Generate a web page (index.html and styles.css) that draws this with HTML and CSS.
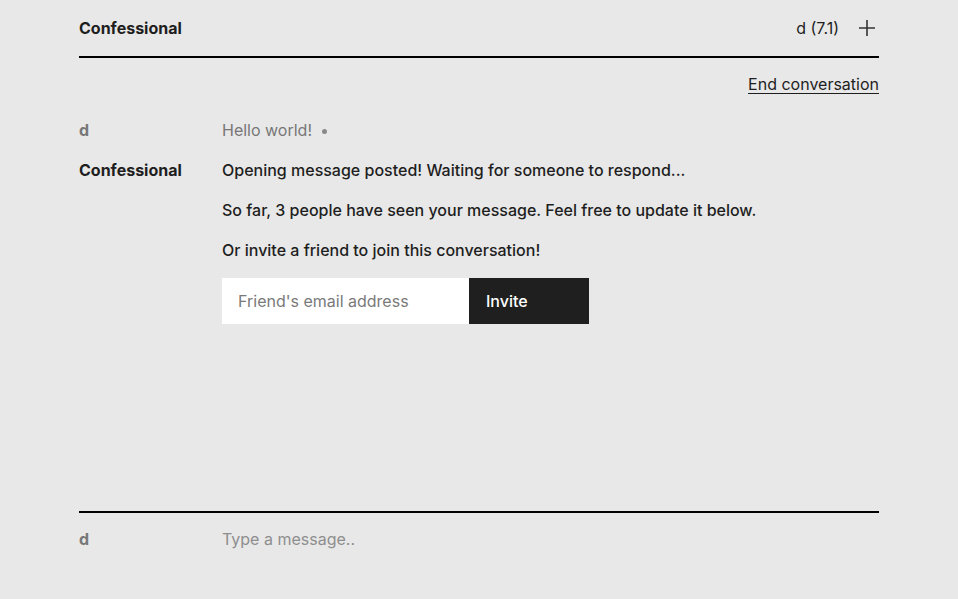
FILE: index.html
```html
<!DOCTYPE html>
<html lang="en">
<head>
<meta charset="utf-8">
<title>Confessional</title>
<link rel="stylesheet" href="styles.css">
</head>
<body>
<div class="page">
  <header class="header">
    <div class="title">Confessional</div>
    <div class="header-right">
      <span class="user">d (7.1)</span>
      <svg class="plus" width="16" height="16" viewBox="0 0 16 16" aria-hidden="true">
        <path d="M8 0V16M0 8H16" stroke="#333" stroke-width="1.6" fill="none"/>
      </svg>
    </div>
  </header>
  <div class="actions"><a class="end" href="#">End conversation</a></div>
  <main class="messages">
    <div class="msg">
      <div class="author muted">d</div>
      <div class="body">
        <p class="text grey">Hello world! <span class="dot"></span></p>
      </div>
    </div>
    <div class="msg">
      <div class="author">Confessional</div>
      <div class="body">
        <p class="text">Opening message posted! Waiting for someone to respond...</p>
        <p class="text">So far, 3 people have seen your message. Feel free to update it below.</p>
        <p class="text">Or invite a friend to join this conversation!</p>
        <form class="invite">
          <input class="email" type="text" placeholder="Friend's email address">
          <button class="invite-btn" type="button">Invite</button>
        </form>
      </div>
    </div>
  </main>
  <footer class="composer">
    <div class="author muted">d</div>
    <input class="message-input" type="text" placeholder="Type a message..">
  </footer>
</div>
</body>
</html>
```

FILE: styles.css
```css
* { box-sizing: border-box; }
html, body { margin: 0; padding: 0; }
body {
  background: #e8e8e8;
  color: #1e1e1e;
  font-family: Inter, "Noto Sans", sans-serif;
  font-size: 16px;
  line-height: 24px;
}
.page {
  width: 800px;
  margin: 0 auto;
  height: 100vh;
  display: flex;
  flex-direction: column;
}
.header {
  height: 58px;
  border-bottom: 2px solid #000;
  display: flex;
  align-items: center;
  justify-content: space-between;
}
.title { font-weight: 700; }
.header-right {
  display: flex;
  align-items: center;
  gap: 20px;
  padding-right: 4px;
}
.plus { display: block; }
.actions {
  display: flex;
  justify-content: flex-end;
  margin-top: 14px;
}
.end {
  color: #1e1e1e;
  text-decoration: underline;
  text-underline-offset: 3px;
}
.messages {
  flex: 1;
  padding-top: 22px;
  display: flex;
  flex-direction: column;
  gap: 16px;
}
.msg {
  display: flex;
}
.author {
  width: 143px;
  flex: none;
  font-weight: 700;
}
.muted { color: #777; }
.body { flex: 1; }
.text { margin: 0 0 16px; font-weight: 500; }
.grey { color: #777; font-weight: 400; }
.msg:first-child .text { margin: 0; }
.dot {
  display: inline-block;
  width: 5px;
  height: 5px;
  border-radius: 50%;
  background: #888;
  margin-left: 5px;
  vertical-align: middle;
}
.invite {
  display: flex;
  margin: 0;
}
.email {
  width: 247px;
  height: 46px;
  border: 0;
  background: #fff;
  padding: 0 16px;
  font: inherit;
  color: #1e1e1e;
  outline: none;
}
.email::placeholder { color: #7a7a7a; }
.invite-btn {
  width: 120px;
  height: 46px;
  border: 0;
  background: #1f1f1f;
  color: #fff;
  font: inherit;
  font-weight: 500;
  text-align: left;
  padding: 0 17px;
}
.composer {
  height: 88px;
  border-top: 2px solid #000;
  display: flex;
  align-items: flex-start;
  padding-top: 14px;
}
.message-input {
  flex: 1;
  border: 0;
  background: transparent;
  font: inherit;
  line-height: 24px;
  padding: 0;
  outline: none;
  color: #1e1e1e;
}
.message-input::placeholder { color: #8e8e8e; }
```
